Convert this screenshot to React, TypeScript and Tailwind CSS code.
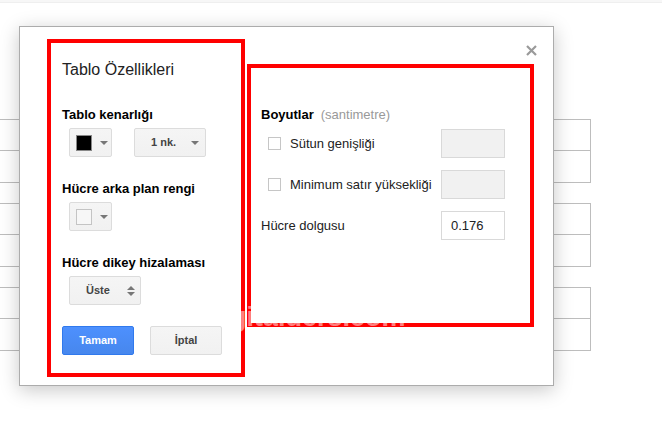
const Caret = () => (
  <span className="inline-block w-0 h-0 border-x-[4px] border-t-[4px] border-x-transparent border-t-[#777]"></span>
);

const BgTable = () => (
  <div className="w-[592px] -ml-px border border-[#bdbdbd]">
    <div className="h-[31px] border-b border-[#bdbdbd]"></div>
    <div className="h-[31px]"></div>
  </div>
);

const MenuButton: React.FC<{ className?: string; children: React.ReactNode }> = ({ className, children }) => (
  <div
    className={
      "h-[29px] flex items-center rounded-[2px] border border-[#dcdcdc] bg-gradient-to-b from-[#f5f5f5] to-[#f1f1f1] text-[11px] font-bold text-[#444] " +
      (className ?? "")
    }
  >
    {children}
  </div>
);

const Checkbox = () => <span className="w-[13px] h-[13px] border border-[#c6c6c6] bg-white shrink-0"></span>;

export default function App() {
  return (
    <div
      className="relative w-[662px] h-[436px] bg-white overflow-hidden text-[#222]"
      style={{ fontFamily: '"Liberation Sans", Arial, sans-serif' }}
    >
      {/* page behind the dialog */}
      <div className="h-[3px] bg-[#f7f7f7] border-b border-[#efefef]"></div>
      <div className="pt-[116px] flex flex-col gap-[20px]">
        <BgTable />
        <BgTable />
        <BgTable />
      </div>

      {/* dialog */}
      <div className="absolute left-[19px] top-[26px] w-[535px] h-[360px] bg-white border border-[#acacac] shadow-[0_4px_18px_rgba(0,0,0,0.22)]">
        <svg className="absolute left-[506px] top-[18px]" width="11" height="11" viewBox="0 0 11 11">
          <path d="M1 1L10 10M10 1L1 10" stroke="#9a9a9a" strokeWidth="2.2" />
        </svg>

        <div className="flex items-start pl-[27px] pt-[12px] gap-[2px]">
          {/* left column */}
          <div className="w-[198px] h-[338px] border-4 border-[#ff0000] pl-[11px] pt-[17px] flex flex-col">
            <div className="text-[16px] leading-[20px] text-[#222]">Tablo Özellikleri</div>

            <div className="mt-[27px] text-[13px] leading-[16px] font-bold text-black">Tablo kenarlığı</div>
            <div className="mt-[5px] ml-[7px] flex gap-[22px]">
              <MenuButton className="w-[43px] pl-[6px] gap-[8px]">
                <span className="w-[16px] h-[16px] bg-black border border-[#888]"></span>
                <Caret />
              </MenuButton>
              <MenuButton className="w-[72px] pl-[16px] pr-[6px] justify-between">
                <span>1 nk.</span>
                <Caret />
              </MenuButton>
            </div>

            <div className="mt-[24px] text-[13px] leading-[16px] font-bold text-black">Hücre arka plan rengi</div>
            <div className="mt-[5px] ml-[7px] flex">
              <MenuButton className="w-[43px] pl-[6px] gap-[8px]">
                <span className="w-[16px] h-[16px] bg-[#f7f7f7] border border-[#c4c4c4]"></span>
                <Caret />
              </MenuButton>
            </div>

            <div className="mt-[24px] text-[13px] leading-[16px] font-bold text-black">Hücre dikey hizalaması</div>
            <div className="mt-[5px] ml-[7px] flex">
              <MenuButton className="w-[72px] pl-[16px] pr-[5px] justify-between">
                <span>Üste</span>
                <span className="flex flex-col gap-[2px]">
                  <span className="w-0 h-0 border-x-[4px] border-b-[4px] border-x-transparent border-b-[#777]"></span>
                  <span className="w-0 h-0 border-x-[4px] border-t-[4px] border-x-transparent border-t-[#777]"></span>
                </span>
              </MenuButton>
            </div>

            <div className="mt-[21px] flex gap-[16px]">
              <button className="w-[72px] h-[29px] rounded-[2px] border border-[#3079ed] bg-gradient-to-b from-[#4d90fe] to-[#4787ed] text-white text-[11px] font-bold">
                Tamam
              </button>
              <button className="w-[72px] h-[29px] rounded-[2px] border border-[#dcdcdc] bg-gradient-to-b from-[#f5f5f5] to-[#f1f1f1] text-[#444] text-[11px] font-bold">
                İptal
              </button>
            </div>
          </div>

          {/* right column */}
          <div className="mt-[25px] w-[287px] h-[263px] border-4 border-[#ff0000] pt-[39px] flex flex-col">
            <div className="pl-[10px] text-[13px] leading-[16px]">
              <span className="font-bold text-black">Boyutlar</span>
              <span className="ml-[7px] text-[#999]">(santimetre)</span>
            </div>

            <div className="mt-[6px] pl-[17px] pr-[25px] flex items-center h-[29px] text-[13px]">
              <Checkbox />
              <span className="ml-[9px]">Sütun genişliği</span>
              <span className="ml-auto w-[64px] h-[29px] bg-[#f1f1f1] border border-[#d9d9d9]"></span>
            </div>

            <div className="mt-[12px] pl-[17px] pr-[25px] flex items-center h-[29px] text-[13px]">
              <Checkbox />
              <span className="ml-[9px]">Minimum satır yüksekliği</span>
              <span className="ml-auto w-[64px] h-[29px] bg-[#f1f1f1] border border-[#d9d9d9]"></span>
            </div>

            <div className="mt-[12px] pl-[10px] pr-[25px] flex items-center h-[29px] text-[13px]">
              <span>Hücre dolgusu</span>
              <span className="ml-auto w-[64px] h-[29px] bg-white border border-[#d9d9d9] pl-[9px] flex items-center">
                0.176
              </span>
            </div>
          </div>
        </div>
      </div>

      {/* watermark */}
      <div className="absolute left-[206px] top-[302px] text-[27px] leading-[30px] font-bold text-white/50 pointer-events-none">
        digitalders.com
      </div>
    </div>
  );
}
